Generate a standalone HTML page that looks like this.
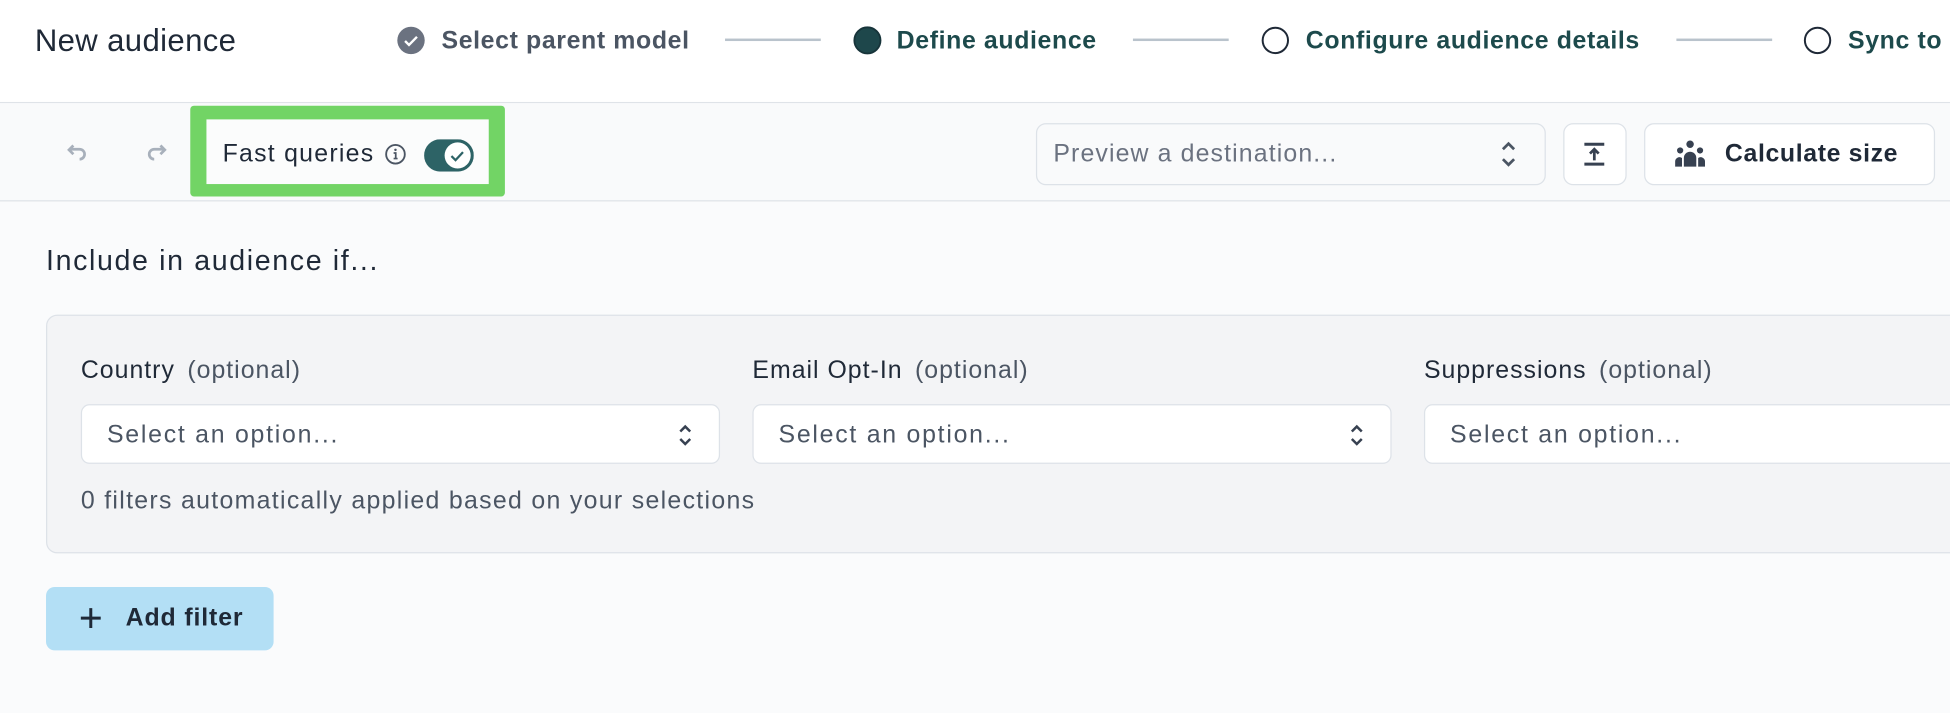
<!DOCTYPE html>
<html><head><meta charset="utf-8"><style>
html,body{margin:0;padding:0;width:1950px;height:712px;overflow:hidden;background:#fafbfc;font-family:"Liberation Sans",sans-serif;}
#w{position:absolute;left:0;top:0;width:1568px;height:573px;overflow:hidden;transform:scale(1.24362);transform-origin:0 0;background:#fafbfc;}
.a{position:absolute;white-space:nowrap;}
.hdr{position:absolute;left:0;top:0;width:1568px;height:82px;background:#fff;border-bottom:1px solid #dfe3e8;}
.tb{position:absolute;left:0;top:83px;width:1568px;height:78px;background:#f9fafb;border-bottom:1px solid #dfe3e8;}
.step{font-size:20px;font-weight:bold;color:#1d4a4c;top:22px;letter-spacing:0.5px;}
.line{position:absolute;top:31px;height:1.5px;background:#b9c3cc;}
.sel{position:absolute;background:#fff;border:1.5px solid #dde2e8;border-radius:7px;height:48px;box-sizing:border-box;}
.sel span{position:absolute;left:20px;top:13px;font-size:20px;letter-spacing:1.4px;color:#4b5563;}
.lab{font-size:20px;letter-spacing:0.8px;color:#1f2937;top:287px;}
.lab i{font-style:normal;color:#4b5563;margin-left:10px;}
</style></head><body><div id="w">
<div class="hdr"></div>
<div class="a" style="left:28px;top:19px;font-size:25px;letter-spacing:0.3px;color:#1f2937;">New audience</div>
<svg class="a" style="left:319px;top:21px" width="23" height="23" viewBox="0 0 24 24"><circle cx="12" cy="12" r="11.5" fill="#6b7280"/><path d="M7 12.5l3.3 3.3L17 9" stroke="#fff" stroke-width="2" fill="none"/></svg>
<div class="a step" style="left:355px;color:#4b5563;">Select parent model</div>
<div class="line" style="left:583px;width:77px"></div>
<svg class="a" style="left:686px;top:21px" width="23" height="23"><circle cx="11.5" cy="11.5" r="10.5" fill="#1e474b" stroke="#17343a" stroke-width="1.5"/></svg>
<div class="a step" style="left:721px;">Define audience</div>
<div class="line" style="left:911px;width:77px"></div>
<svg class="a" style="left:1014px;top:21px" width="23" height="23"><circle cx="11.5" cy="11.5" r="10.2" fill="#fff" stroke="#1f2937" stroke-width="1.6"/></svg>
<div class="a step" style="left:1050px;">Configure audience details</div>
<div class="line" style="left:1348px;width:77px"></div>
<svg class="a" style="left:1450px;top:21px" width="23" height="23"><circle cx="11.5" cy="11.5" r="10.2" fill="#fff" stroke="#1f2937" stroke-width="1.6"/></svg>
<div class="a step" style="left:1486px;">Sync to destination</div>

<div class="tb"></div>
<svg class="a" style="left:52px;top:116px" width="20" height="16" viewBox="0 0 20 16"><path d="M4 4h8a4 4 0 010 8" stroke="#a8b0bb" stroke-width="2.2" fill="none"/><path d="M7 1L3.5 4.5 7 8" stroke="#a8b0bb" stroke-width="2.2" fill="none"/></svg>
<svg class="a" style="left:116px;top:116px" width="20" height="16" viewBox="0 0 20 16"><path d="M16 4H8a4 4 0 000 8" stroke="#a8b0bb" stroke-width="2.2" fill="none"/><path d="M13 1l3.5 3.5L13 8" stroke="#a8b0bb" stroke-width="2.2" fill="none"/></svg>
<div class="a" style="left:153px;top:85px;width:253px;height:73px;background:#72d465;border-radius:3px;"></div>
<div class="a" style="left:166px;top:96px;width:227px;height:52px;background:#fbfcfc;"></div>
<div class="a" style="left:179px;top:113px;font-size:20px;letter-spacing:1px;color:#1f2937;">Fast queries</div>
<svg class="a" style="left:309px;top:115px" width="18" height="18" viewBox="0 0 18 18"><circle cx="9" cy="9" r="7.5" fill="none" stroke="#4b5563" stroke-width="1.5"/><circle cx="9" cy="5.5" r="1" fill="#4b5563"/><path d="M7.5 8h1.7v4.5M7.5 12.5h3.2" stroke="#4b5563" stroke-width="1.4" fill="none"/></svg>
<svg class="a" style="left:341px;top:112px" width="40" height="26" viewBox="0 0 40 26"><rect x="0" y="0" width="40" height="26" rx="13" fill="#2d6366"/><circle cx="27" cy="13" r="10.5" fill="#fff"/><path d="M22 13.5l3.3 3.3 6-6.5" stroke="#2d6366" stroke-width="1.8" fill="none"/></svg>

<div class="a" style="left:833px;top:99px;width:410px;height:50px;background:#f9fafb;border:1.5px solid #dde2e8;border-radius:8px;box-sizing:border-box;"></div>
<div class="a" style="left:847px;top:113px;font-size:20px;letter-spacing:0.9px;color:#6b7280;">Preview a destination...</div>
<svg class="a" style="left:1205px;top:112px" width="16" height="24" viewBox="0 0 16 24"><path d="M3.5 8L8 3.5 12.5 8M3.5 16L8 20.5 12.5 16" stroke="#4b5563" stroke-width="2.2" fill="none"/></svg>
<div class="a" style="left:1257px;top:99px;width:51px;height:50px;background:#fff;border:1.5px solid #dde2e8;border-radius:8px;box-sizing:border-box;"></div>
<svg class="a" style="left:1270px;top:112px" width="24" height="24" viewBox="0 0 24 24"><path d="M4 4h16M4 20h16" stroke="#374151" stroke-width="2.4"/><path d="M12 17V8M8.5 11.5L12 8l3.5 3.5" stroke="#374151" stroke-width="2.2" fill="none"/></svg>
<div class="a" style="left:1322px;top:99px;width:234px;height:50px;background:#fff;border:1.5px solid #dde2e8;border-radius:8px;box-sizing:border-box;"></div>
<svg class="a" style="left:1346px;top:112px" width="26" height="24" viewBox="0 0 26 24"><circle cx="13" cy="4" r="3" fill="#374151"/><circle cx="5" cy="9" r="2.5" fill="#374151"/><circle cx="21" cy="9" r="2.5" fill="#374151"/><path d="M8 22v-7a5 5 0 0110 0v7z" fill="#374151"/><path d="M1 22v-4a3.5 3.5 0 015.5-3V22zM25 22v-4a3.5 3.5 0 00-5.5-3V22z" fill="#374151"/></svg>
<div class="a" style="left:1387px;top:113px;font-size:20px;letter-spacing:0.5px;font-weight:bold;color:#1f2937;">Calculate size</div>

<div class="a" style="left:37px;top:196px;font-size:23px;letter-spacing:1.3px;color:#1f2937;">Include in audience if...</div>
<div class="a" style="left:37px;top:253px;width:1560px;height:192px;background:#f3f4f6;border:1.5px solid #dde2e8;border-radius:9px;box-sizing:border-box;"></div>
<div class="a lab" style="left:65px;">Country<i>(optional)</i></div>
<div class="a lab" style="left:605px;">Email Opt-In<i>(optional)</i></div>
<div class="a lab" style="left:1145px;">Suppressions<i>(optional)</i></div>
<div class="sel" style="left:65px;top:325px;width:514px;"><span>Select an option...</span><svg style="position:absolute;right:20px;top:13px" width="14" height="22" viewBox="0 0 14 22"><path d="M3 8l4-4 4 4M3 14l4 4 4-4" stroke="#374151" stroke-width="2" fill="none"/></svg></div>
<div class="sel" style="left:605px;top:325px;width:514px;"><span>Select an option...</span><svg style="position:absolute;right:20px;top:13px" width="14" height="22" viewBox="0 0 14 22"><path d="M3 8l4-4 4 4M3 14l4 4 4-4" stroke="#374151" stroke-width="2" fill="none"/></svg></div>
<div class="sel" style="left:1145px;top:325px;width:514px;"><span>Select an option...</span></div>
<div class="a" style="left:65px;top:392px;font-size:20px;letter-spacing:1.05px;color:#4b5563;">0 filters automatically applied based on your selections</div>

<div class="a" style="left:37px;top:472px;width:183px;height:51px;background:#b3dff5;border-radius:7px;"></div>
<svg class="a" style="left:63px;top:487px" width="20" height="20" viewBox="0 0 20 20"><path d="M10 2v16M2 10h16" stroke="#1f2937" stroke-width="2.4"/></svg>
<div class="a" style="left:101px;top:486px;font-size:20px;letter-spacing:0.7px;font-weight:bold;color:#1f2937;">Add filter</div>
</div></body></html>
